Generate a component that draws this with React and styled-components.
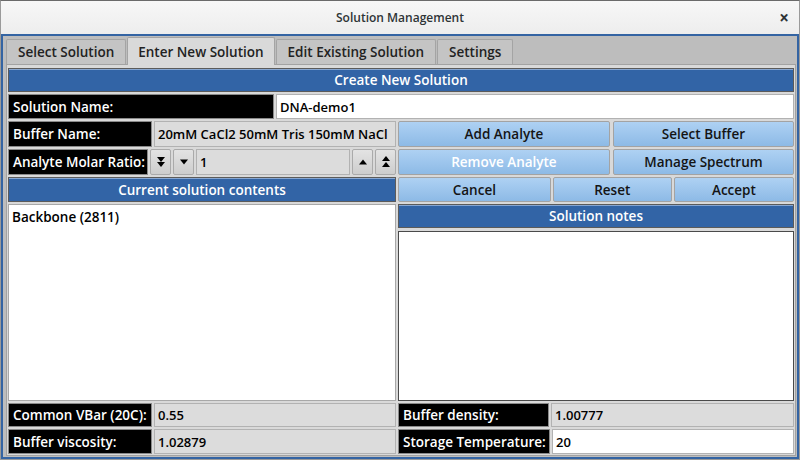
import React from 'react'
import styled, { createGlobalStyle } from 'styled-components'

const GlobalStyle = createGlobalStyle`
  html, body {
    margin: 0;
    padding: 0;
    background: #8c8c8c;
  }
  * { box-sizing: border-box; }
`

const font = `"Open Sans", "DejaVu Sans", sans-serif`

const Window = styled.div`
  width: 800px;
  height: 460px;
  display: flex;
  flex-direction: column;
  border: 1px solid #9a9a9a;
  border-top-color: #6a6a6a;
  font-family: ${font};
  font-size: 13.5px;
  background: #f2f2f2;
`

const TitleBar = styled.div`
  height: 33px;
  display: grid;
  grid-template-columns: 1fr auto 1fr;
  align-items: center;
  background: linear-gradient(#f7f7f7, #ededed);
  color: #2e3436;
  font-weight: 600;
  font-size: 12px;
`

const Title = styled.div`
  grid-column: 2;
`

const Close = styled.div`
  justify-self: end;
  margin-right: 10px;
  font-size: 17px;
  font-weight: 700;
  line-height: 1;
  color: #2e3436;
`

const Frame = styled.div`
  flex: 1;
  display: flex;
  flex-direction: column;
  border: 2px solid #3464a3;
  background: #bdbdbd;
  padding: 1px 1px 1px 3px;
  min-height: 0;
`

const TabBar = styled.div`
  display: flex;
  align-items: flex-end;
  height: 27px;
  gap: 1px;
`

const Tab = styled.div`
  height: ${p => (p.$active ? 28 : 25)}px;
  padding: 0 ${p => (p.$active ? 10 : 11)}px;
  display: flex;
  align-items: center;
  border: 1px solid #a4a4a4;
  border-bottom: none;
  border-radius: 2px 2px 0 0;
  background: ${p => (p.$active ? '#d9d9d9' : '#c4c4c4')};
  color: #222;
  font-weight: 600;
  margin-bottom: ${p => (p.$active ? -1 : 0)}px;
  position: relative;
  z-index: ${p => (p.$active ? 1 : 0)};
`

const Panel = styled.div`
  flex: 1;
  min-height: 0;
  background: #d9d9d9;
  border: 1px solid #a2a2a2;
  padding: 3px 1px 1px 1px;
  display: grid;
  grid-template-columns: 388px 1fr;
  grid-template-rows: 24px 25px 26px 26px 25px 24px 1fr 24px 25px;
  gap: 2px;
`

const Header = styled.div`
  grid-column: ${p => p.$span || 'auto'};
  background: #3264a6;
  color: #fff;
  font-weight: 600;
  display: flex;
  align-items: center;
  justify-content: center;
  border: 1px solid #5b5b5b;
  box-shadow: inset 0 1px 0 #86a6d2;
`

const Row = styled.div`
  grid-column: ${p => p.$span || 'auto'};
  display: flex;
  gap: ${p => p.$gap ?? 2}px;
  min-width: 0;
`

const Label = styled.div`
  width: ${p => p.$w}px;
  flex: none;
  background: #000;
  color: #fff;
  font-weight: 600;
  display: flex;
  align-items: center;
  padding-left: 4px;
  border: 1px solid #8a8a8a;
  white-space: nowrap;
`

const Field = styled.div`
  flex: 1;
  min-width: 0;
  display: flex;
  align-items: center;
  padding-left: 3px;
  background: ${p => (p.$white ? '#ffffff' : '#dcdcdc')};
  border: 1px solid #b2b2b2;
  color: #000;
  font-weight: 600;
  font-size: 13px;
  white-space: nowrap;
  overflow: hidden;
`

const Button = styled.div`
  flex: ${p => p.$flex || 1};
  display: flex;
  align-items: center;
  justify-content: center;
  background: linear-gradient(#aed1f3, #8dbae6);
  border: 1px solid #a3a3a3;
  border-radius: 2px;
  font-weight: 600;
  color: ${p => (p.$disabled ? '#ffffff' : '#141414')};
`

const Spin = styled.div`
  width: 21px;
  flex: none;
  display: flex;
  align-items: center;
  justify-content: center;
  background: linear-gradient(#e3e3e3, #cdcdcd);
  border: 1px solid #aaaaaa;
  border-radius: 2px;
`

const List = styled.div`
  grid-row: span 2;
  background: #fff;
  border: 1px solid #a8a8a8;
  padding: 3px 3px;
  font-weight: 600;
  color: #000;
`

const Notes = styled.div`
  background: #fff;
  border: 1px solid #4a4a4a;
  margin-top: 1px;
`

function Arrow({ up, double }) {
  const tri = (y) =>
    up ? `M1 ${y + 5} L5 ${y} L9 ${y + 5} Z` : `M1 ${y} L5 ${y + 5} L9 ${y} Z`
  return (
    <svg width="10" height="12" viewBox="0 0 10 12">
      {double ? (
        <>
          <path d={tri(up ? 0 : 1)} fill="#000" />
          <path d={tri(6)} fill="#000" />
        </>
      ) : (
        <path d={tri(3.5)} fill="#000" />
      )}
    </svg>
  )
}

export default function App() {
  return (
    <>
      <GlobalStyle />
      <Window>
        <TitleBar>
          <Title>Solution Management</Title>
          <Close>×</Close>
        </TitleBar>
        <Frame>
          <TabBar>
            <Tab>Select Solution</Tab>
            <Tab $active>Enter New Solution</Tab>
            <Tab>Edit Existing Solution</Tab>
            <Tab>Settings</Tab>
          </TabBar>
          <Panel>
            <Header $span="1 / -1">Create New Solution</Header>

            <Row $span="1 / -1">
              <Label $w={266}>Solution Name:</Label>
              <Field $white>DNA-demo1</Field>
            </Row>

            <Row>
              <Label $w={144}>Buffer Name:</Label>
              <Field>20mM CaCl2 50mM Tris 150mM NaCl</Field>
            </Row>
            <Row $gap={3}>
              <Button $flex={212}>Add Analyte</Button>
              <Button $flex={181}>Select Buffer</Button>
            </Row>

            <Row>
              <Label $w={140}>Analyte Molar Ratio:</Label>
              <Spin><Arrow double /></Spin>
              <Spin><Arrow /></Spin>
              <Field>1</Field>
              <Spin><Arrow up /></Spin>
              <Spin><Arrow up double /></Spin>
            </Row>
            <Row $gap={3}>
              <Button $flex={212} $disabled>Remove Analyte</Button>
              <Button $flex={181}>Manage Spectrum</Button>
            </Row>

            <Header>Current solution contents</Header>
            <Row $gap={2}>
              <Button $flex={153}>Cancel</Button>
              <Button $flex={119}>Reset</Button>
              <Button $flex={120}>Accept</Button>
            </Row>

            <List>Backbone (2811)</List>
            <Header>Solution notes</Header>
            <Notes />

            <Row>
              <Label $w={144}>Common VBar (20C):</Label>
              <Field>0.55</Field>
            </Row>
            <Row>
              <Label $w={151}>Buffer density:</Label>
              <Field>1.00777</Field>
            </Row>

            <Row>
              <Label $w={144}>Buffer viscosity:</Label>
              <Field>1.02879</Field>
            </Row>
            <Row>
              <Label $w={152}>Storage Temperature:</Label>
              <Field $white>20</Field>
            </Row>
          </Panel>
        </Frame>
      </Window>
    </>
  )
}
